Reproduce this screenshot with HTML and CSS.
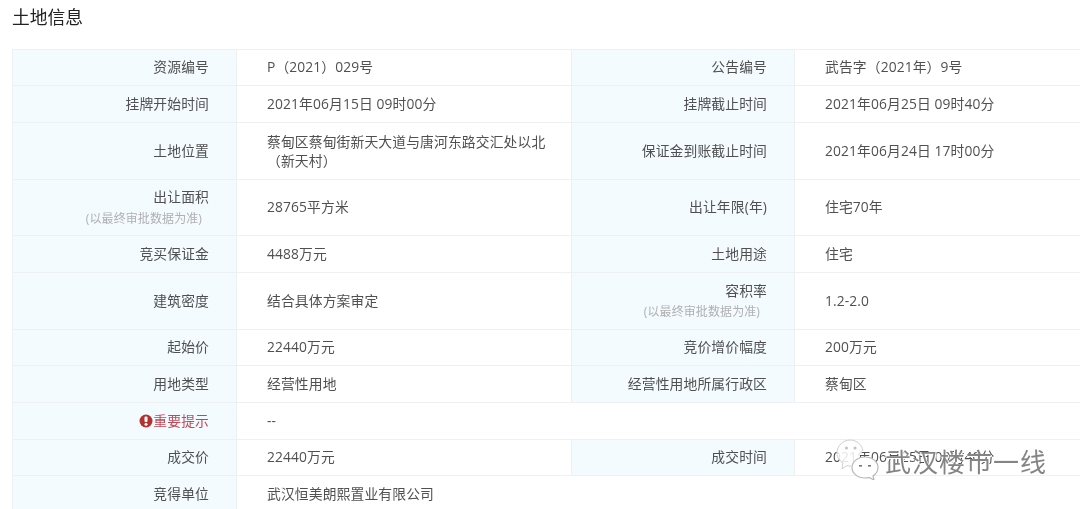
FILE: index.html
```html
<!DOCTYPE html>
<html lang="zh-CN">
<head>
<meta charset="utf-8">
<title>土地信息</title>
<link rel="stylesheet" href="styles.css">
</head>
<body>
<main class="page">
  <div class="content">
  <h2 class="title">土地信息</h2>
  <table class="info">
    <colgroup><col class="c1"><col class="c2"><col class="c3"><col class="c4"></colgroup>
    <tbody>
      <tr class="r36"><th>资源编号</th><td>P（2021）029号</td><th>公告编号</th><td>武告字（2021年）9号</td></tr>
      <tr class="r37"><th>挂牌开始时间</th><td>2021年06月15日 09时00分</td><th>挂牌截止时间</th><td>2021年06月25日 09时40分</td></tr>
      <tr class="r57"><th>土地位置</th><td class="wrap">蔡甸区蔡甸街新天大道与唐河东路交汇处以北（新天村）</td><th>保证金到账截止时间</th><td>2021年06月24日 17时00分</td></tr>
      <tr class="r56"><th class="stack stack-even">出让面积<span class="note">(以最终审批数据为准)</span></th><td>28765平方米</td><th>出让年限(年)</th><td>住宅70年</td></tr>
      <tr class="r37"><th>竞买保证金</th><td>4488万元</td><th>土地用途</th><td>住宅</td></tr>
      <tr class="r57"><th>建筑密度</th><td>结合具体方案审定</td><th class="stack">容积率<span class="note">(以最终审批数据为准)</span></th><td>1.2-2.0</td></tr>
      <tr class="r36"><th>起始价</th><td>22440万元</td><th>竞价增价幅度</th><td>200万元</td></tr>
      <tr class="r37"><th>用地类型</th><td>经营性用地</td><th>经营性用地所属行政区</th><td>蔡甸区</td></tr>
      <tr class="r37"><th class="warn"><svg class="warn-icon" viewBox="0 0 14 14" aria-hidden="true"><circle cx="7" cy="7" r="6.500" fill="#b5312f"/><rect x="5.500" y="2.600" width="3" height="5.400" rx="1" fill="#fff"/><circle cx="7" cy="10.300" r="1.500" fill="#fff"/></svg>重要提示</th><td colspan="3">--</td></tr>
      <tr class="r36"><th>成交价</th><td>22440万元</td><th>成交时间</th><td>2021年06月25日 09时40分</td></tr>
      <tr class="r37"><th>竞得单位</th><td colspan="3">武汉恒美朗熙置业有限公司</td></tr>
    </tbody>
  </table>
  </div>
  <div class="watermark">
    <svg class="wm-icon" viewBox="0 0 44 42" aria-hidden="true">
      <path d="M15 28c-1.500 0-3 0-4-.5L6 31l1-6C3 22.500 1 19 1 15 1 8 7 2 14 2s12 5 13 11" fill="rgba(255,255,255,.85)" stroke="#d0d0d0" stroke-width="1"/>
      <path d="M29 19c7.500 0 13 4.800 13 10.500 0 3.500-2 6.500-5 8.500l1 4-5-2.500c-1.300.3-2.600.5-4 .5-7.500 0-13-4.800-13-10.500S21.500 19 29 19z" fill="#fff" stroke="#b8b8b8" stroke-width="1.200"/>
      <circle cx="10.500" cy="10" r="1.600" fill="#c4c4c4"/><circle cx="19" cy="10" r="1.600" fill="#c4c4c4"/>
      <rect x="23" y="27" width="3" height="1.600" fill="#777"/><rect x="32" y="27" width="3" height="1.600" fill="#777"/>
    </svg>
    <span class="wm-text">武汉楼市一线</span>
  </div>
</main>
</body>
</html>
```
FILE: styles.css
```css
html, body {
  margin: 0;
  padding: 0;
  background: #fff;
}
body {
  width: 1080px;
  height: 509px;
  overflow: hidden;
  font-family: "Open Sans", "Noto Sans CJK SC", sans-serif;
}
.page {
  position: relative;
  height: 509px;
  overflow: hidden;
}
.content {
  padding-left: 12px;
  filter: blur(0.3px);
}
.title {
  margin: 0;
  height: 49px;
  box-sizing: border-box;
  padding-top: 4px;
  font-size: 17.800px;
  font-weight: 400;
  line-height: 26px;
  color: #222;
}
.info {
  width: 1088px;
  table-layout: fixed;
  border-collapse: collapse;
  font-size: 13.800px;
  letter-spacing: 0.12px;
  line-height: 18px;
  color: #505050;
}
.c1 { width: 224px; }
.c2 { width: 335px; }
.c3 { width: 223px; }
.c4 { width: 306px; }
.info th, .info td {
  border: 1px solid #eef0f3;
  box-sizing: border-box;
  vertical-align: middle;
  padding: 0 0 2px;
}
.r37 th, .r37 td, .r57 th, .r57 td {
  padding-bottom: 0;
}
.info th {
  background: #f3fbfe;
  font-weight: 400;
  text-align: right;
  padding-right: 27px;
}
.info td {
  padding-left: 30px;
  padding-right: 20px;
}
.r36 { height: 36px; }
.r37 { height: 37px; }
.r56 { height: 56px; }
.r57 { height: 57px; }
.info .stack {
  padding-bottom: 0;
}
.info .stack-even {
  padding-bottom: 1px;
}
.note {
  display: block;
  margin-top: 4px;
  padding-right: 7px;
  font-size: 12px;
  line-height: 16px;
  letter-spacing: 0.1px;
  color: #b0b0b0;
}
.stack-even .note {
  margin-top: 5px;
}
.info td.wrap {
  padding-right: 24px;
  line-height: 19px;
}
.info th.warn {
  color: #bf4a55;
}
.warn-icon {
  width: 14px;
  height: 14px;
  vertical-align: -2px;
}
.watermark {
  position: absolute;
  left: 836px;
  top: 438px;
  display: flex;
  align-items: center;
  gap: 5px;
}
.wm-icon {
  width: 44px;
  height: 42px;
}
.wm-text {
  margin-top: 6px;
  font-size: 26px;
  line-height: 34px;
  letter-spacing: 1px;
  color: rgba(110, 110, 110, .85);
  text-shadow: 1px 1px 0 #fff, -1px 0 0 #fff;
  filter: blur(0.3px);
}
```
